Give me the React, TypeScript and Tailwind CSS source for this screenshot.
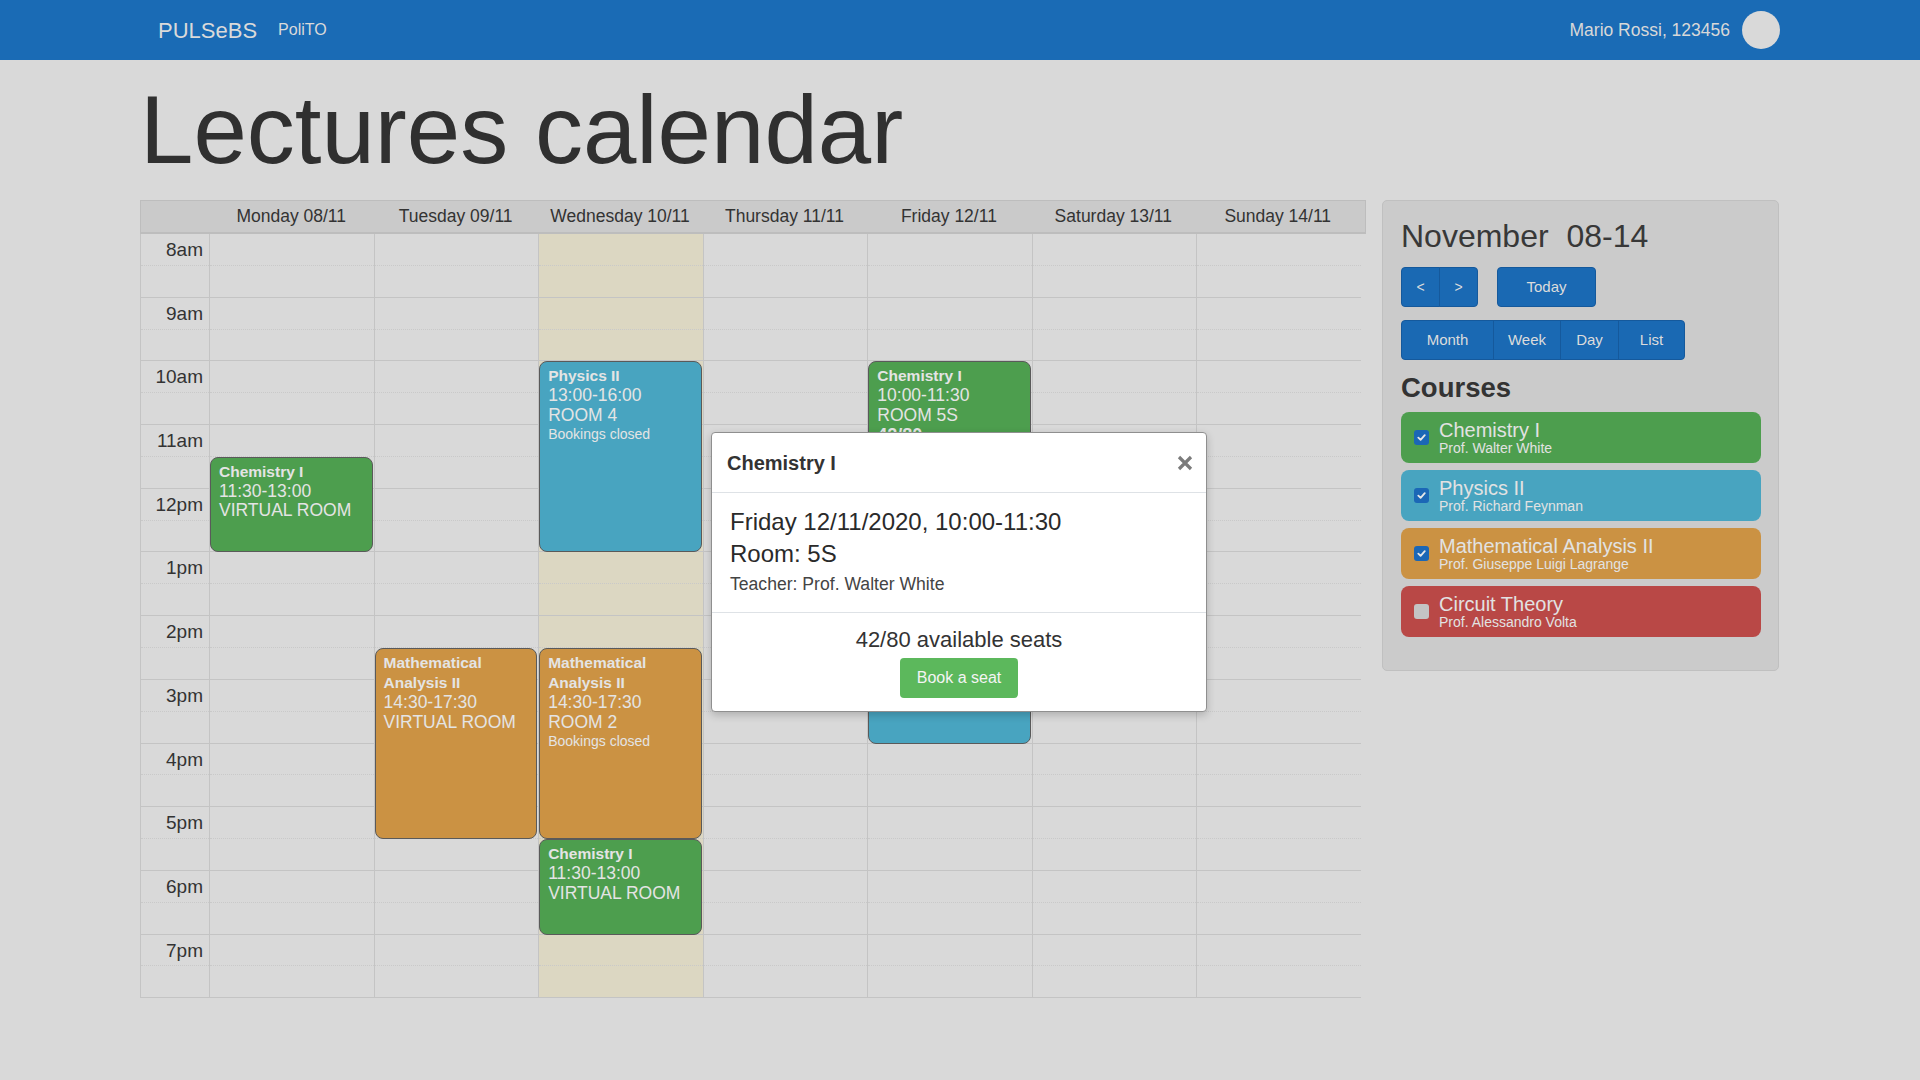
import React from "react";

const HOUR = 63.7;
const DAYS = [
  "Monday 08/11",
  "Tuesday 09/11",
  "Wednesday 10/11",
  "Thursday 11/11",
  "Friday 12/11",
  "Saturday 13/11",
  "Sunday 14/11",
];
const HOURS = ["8am", "9am", "10am", "11am", "12pm", "1pm", "2pm", "3pm", "4pm", "5pm", "6pm", "7pm"];

type Color = "green" | "blue" | "orange" | "red";
const BG: Record<Color, string> = {
  green: "bg-[#4d9e4e]",
  blue: "bg-[#48a4c0]",
  orange: "bg-[#cb9243]",
  red: "bg-[#b94846]",
};

type Ev = {
  day: number;
  start: number;
  end: number;
  color: Color;
  title: string;
  lines: string[];
  small?: string;
  seats?: boolean;
};

const EVENTS: Ev[] = [
  { day: 0, start: 11.5, end: 13, color: "green", title: "Chemistry I", lines: ["11:30-13:00", "VIRTUAL ROOM"] },
  { day: 1, start: 14.5, end: 17.5, color: "orange", title: "Mathematical Analysis II", lines: ["14:30-17:30", "VIRTUAL ROOM"] },
  { day: 2, start: 10, end: 13, color: "blue", title: "Physics II", lines: ["13:00-16:00", "ROOM 4"], small: "Bookings closed" },
  { day: 2, start: 14.5, end: 17.5, color: "orange", title: "Mathematical Analysis II", lines: ["14:30-17:30", "ROOM 2"], small: "Bookings closed" },
  { day: 2, start: 17.5, end: 19, color: "green", title: "Chemistry I", lines: ["11:30-13:00", "VIRTUAL ROOM"] },
  { day: 4, start: 10, end: 11.5, color: "green", title: "Chemistry I", lines: ["10:00-11:30", "ROOM 5S"], seats: true },
  { day: 4, start: 13, end: 16, color: "blue", title: "", lines: [] },
];

const COURSES: { name: string; prof: string; color: Color; checked: boolean }[] = [
  { name: "Chemistry I", prof: "Prof. Walter White", color: "green", checked: true },
  { name: "Physics II", prof: "Prof. Richard Feynman", color: "blue", checked: true },
  { name: "Mathematical Analysis II", prof: "Prof. Giuseppe Luigi Lagrange", color: "orange", checked: true },
  { name: "Circuit Theory", prof: "Prof. Alessandro Volta", color: "red", checked: false },
];

function EventBlock({ ev }: { ev: Ev }) {
  return (
    <div
      className={`absolute left-0 right-[1px] overflow-hidden rounded-[8px] border border-[#5a5a5a] px-[8px] pt-[4px] text-[#e4e4e4] ${BG[ev.color]}`}
      style={{ top: (ev.start - 8) * HOUR, height: (ev.end - ev.start) * HOUR }}
    >
      {ev.title && <div className="text-[15.5px] font-bold leading-[20px]">{ev.title}</div>}
      {ev.lines.map((l) => (
        <div key={l} className="text-[17.5px] leading-[19.5px]">
          {l}
        </div>
      ))}
      {ev.small && <div className="text-[14px] leading-[18px]">{ev.small}</div>}
      {ev.seats && (
        <div className="leading-[20px]">
          <span className="text-[18px] font-bold">42/80</span>
          <span className="text-[13px]"> available seats</span>
        </div>
      )}
    </div>
  );
}

function Check() {
  return (
    <svg width="9" height="9" viewBox="0 0 10 10">
      <path d="M1.5 5.2 L4 7.6 L8.6 2.4" fill="none" stroke="#e8e8e8" strokeWidth="2" strokeLinecap="round" strokeLinejoin="round" />
    </svg>
  );
}

export default function App() {
  return (
    <div
      className="relative min-h-screen w-full bg-[#d9d9d9]"
      style={{ fontFamily: '"Liberation Sans", Arial, Helvetica, sans-serif' }}
    >
      {/* Navbar */}
      <nav className="h-[60px] bg-[#1a6bb5]">
        <div className="mx-auto flex h-full w-[1640px] items-center pl-[18px]">
          <span className="text-[22px] text-[#dadada]">PULSeBS</span>
          <span className="ml-[21px] text-[16px] text-[#dadada]">PoliTO</span>
          <span className="ml-auto text-[17.5px] text-[#d8d8d8]">Mario Rossi, 123456</span>
          <span className="ml-[12px] h-[38px] w-[38px] rounded-full bg-[#d9d9d9]" />
        </div>
      </nav>

      <main className="mx-auto w-[1640px]">
        <h1 className="mt-[12px] text-[96px] leading-[115px] text-[#303030]">Lectures calendar</h1>

        <div className="mt-[13px] flex items-start">
          {/* Calendar */}
          <div className="w-[1226px]">
            <div className="flex h-[34px] w-[1226px] items-center border border-b-2 border-[#bdbdbd] bg-[#cacaca]">
              <div className="w-[68px]" />
              {DAYS.map((d) => (
                <div key={d} className="flex-1 text-center text-[17.5px] text-[#333]">
                  {d}
                </div>
              ))}
              <div className="w-[5px]" />
            </div>

            <div className="flex w-[1221px] border-l border-[#c4c4c4]">
              <div className="w-[68px]">
                {HOURS.map((h) => (
                  <div key={h} className="relative h-[63.7px] border-b border-[#c4c4c4]">
                    <div className="h-[31.85px] border-b border-dotted border-[#c9c9c9]" />
                    <div className="absolute right-[6px] top-[4px] text-[19px] leading-[24px] text-[#333]">{h}</div>
                  </div>
                ))}
              </div>
              {DAYS.map((d, i) => (
                <div key={d} className={`relative flex-1 border-l border-[#c4c4c4] ${i === 2 ? "bg-[#dcd7c2]" : ""}`}>
                  {HOURS.map((h) => (
                    <div key={h} className="h-[63.7px] border-b border-[#c4c4c4]">
                      <div className="h-[31.85px] border-b border-dotted border-[#c9c9c9]" />
                    </div>
                  ))}
                  {EVENTS.filter((e) => e.day === i).map((e, k) => (
                    <EventBlock key={k} ev={e} />
                  ))}
                </div>
              ))}
            </div>
          </div>

          {/* Sidebar */}
          <aside className="ml-[16px] h-[471px] w-[397px] rounded-[5px] border border-[#c0c0c0] bg-[#cbcbcb] pl-[18px] pr-[17px] pt-[16px]">
            <h2 className="text-[32px] leading-[38px] text-[#383838]">November&nbsp; 08-14</h2>
            <div className="mt-[12px] flex items-center">
              <div className="flex">
                <button className="h-[40px] w-[39px] rounded-l-[4px] border border-[#15599c] bg-[#1a69b3] text-[14px] text-[#dcdcdc]">
                  &lt;
                </button>
                <button className="-ml-px h-[40px] w-[39px] rounded-r-[4px] border border-[#15599c] bg-[#1a69b3] text-[14px] text-[#dcdcdc]">
                  &gt;
                </button>
              </div>
              <button className="ml-[19px] h-[40px] w-[99px] rounded-[4px] border border-[#15599c] bg-[#1a69b3] text-[15px] text-[#dcdcdc]">
                Today
              </button>
            </div>
            <div className="mt-[13px] flex">
              <button className="h-[40px] w-[93px] rounded-l-[4px] border border-[#15599c] bg-[#1a69b3] text-[15px] text-[#dcdcdc]">
                Month
              </button>
              <button className="-ml-px h-[40px] w-[68px] border border-[#15599c] bg-[#1a69b3] text-[15px] text-[#dcdcdc]">
                Week
              </button>
              <button className="-ml-px h-[40px] w-[59px] border border-[#15599c] bg-[#1a69b3] text-[15px] text-[#dcdcdc]">
                Day
              </button>
              <button className="-ml-px h-[40px] w-[67px] rounded-r-[4px] border border-[#15599c] bg-[#1a69b3] text-[15px] text-[#dcdcdc]">
                List
              </button>
            </div>
            <h3 className="mt-[11px] text-[27.5px] font-bold leading-[33px] text-[#333]">Courses</h3>
            <div className="mt-[8px] flex flex-col gap-[7px]">
              {COURSES.map((c) => (
                <div key={c.name} className={`flex h-[51px] items-center rounded-[8px] pl-[13px] ${BG[c.color]}`}>
                  <span
                    className={`flex h-[15px] w-[15px] items-center justify-center rounded-[3px] ${
                      c.checked ? "bg-[#1b67b6]" : "bg-[#c4c4c4]"
                    }`}
                  >
                    {c.checked && <Check />}
                  </span>
                  <div className="ml-[10px] text-[#e2e2e2]">
                    <div className="text-[20px] leading-[20px]">{c.name}</div>
                    <div className="text-[14px] leading-[16px]">{c.prof}</div>
                  </div>
                </div>
              ))}
            </div>
          </aside>
        </div>
      </main>

      {/* Modal */}
      <div className="absolute left-[711px] top-[432px] flex h-[280px] w-[496px] flex-col rounded-[4px] border border-[#8f8f8f] bg-white shadow-[0_3px_9px_rgba(0,0,0,0.2)]">
        <div className="flex h-[60px] items-center justify-between border-b border-[#dee2e6] pl-[15px] pr-[13px]">
          <span className="text-[20px] font-bold text-[#333]">Chemistry I</span>
          <svg width="16" height="16" viewBox="0 0 16 16">
            <path d="M2 2 L14 14 M14 2 L2 14" stroke="#7b7b7b" strokeWidth="3.2" strokeLinecap="butt" />
          </svg>
        </div>
        <div className="h-[120px] border-b border-[#dee2e6] px-[18px] pt-[13px]">
          <div className="text-[24px] leading-[32px] text-[#2a2a2a]">Friday 12/11/2020, 10:00-11:30</div>
          <div className="text-[24px] leading-[32px] text-[#2a2a2a]">Room: 5S</div>
          <div className="mt-[2px] text-[17.6px] leading-[24px] text-[#444]">Teacher: Prof. Walter White</div>
        </div>
        <div className="flex flex-1 flex-col items-center pt-[14px]">
          <div className="text-[22px] leading-[26px] text-[#333]">42/80 available seats</div>
          <button className="mt-[5px] h-[40px] w-[118px] rounded-[4px] bg-[#5cb85c] text-[16px] text-[#f4f4f4]">
            Book a seat
          </button>
        </div>
      </div>
    </div>
  );
}
